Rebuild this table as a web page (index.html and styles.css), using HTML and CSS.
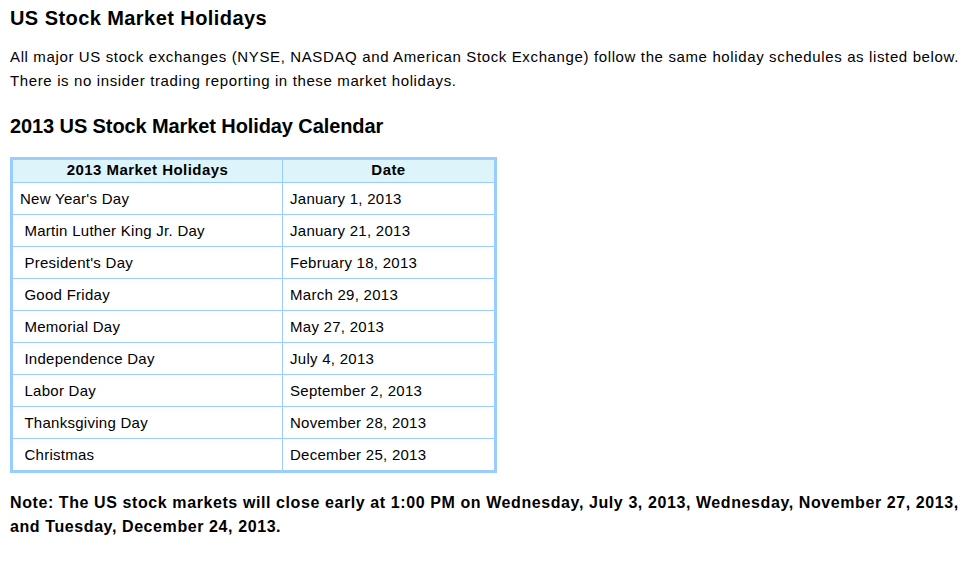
FILE: index.html
```html
<!DOCTYPE html>
<html>
<head>
<meta charset="utf-8">
<link rel="stylesheet" href="styles.css">
</head>
<body>
<div class="page">
  <h1 class="title">US Stock Market Holidays</h1>
  <p class="intro">All major US stock exchanges (NYSE, NASDAQ and American Stock Exchange) follow the same holiday schedules as listed below. There is no insider trading reporting in these market holidays.</p>
  <h2 class="subtitle">2013 US Stock Market Holiday Calendar</h2>
  <table class="holidays">
    <thead>
      <tr><th class="col-name">2013 Market Holidays</th><th class="col-date">Date</th></tr>
    </thead>
    <tbody>
      <tr><td>New Year's Day</td><td>January 1, 2013</td></tr>
      <tr><td>&nbsp;Martin Luther King Jr. Day</td><td>January 21, 2013</td></tr>
      <tr><td>&nbsp;President's Day</td><td>February 18, 2013</td></tr>
      <tr><td>&nbsp;Good Friday</td><td>March 29, 2013</td></tr>
      <tr><td>&nbsp;Memorial Day</td><td>May 27, 2013</td></tr>
      <tr><td>&nbsp;Independence Day</td><td>July 4, 2013</td></tr>
      <tr><td>&nbsp;Labor Day</td><td>September 2, 2013</td></tr>
      <tr><td>&nbsp;Thanksgiving Day</td><td>November 28, 2013</td></tr>
      <tr><td>&nbsp;Christmas</td><td>December 25, 2013</td></tr>
    </tbody>
  </table>
  <p class="note">Note: The US stock markets will close early at 1:00 PM on Wednesday, July 3, 2013, Wednesday, November 27, 2013, and Tuesday, December 24, 2013.</p>
</div>
</body>
</html>
```
FILE: styles.css
```css
html, body {
  margin: 0;
  padding: 0;
  background: #ffffff;
}
body {
  font-family: "Liberation Sans", Arial, sans-serif;
  color: #000000;
}
.page {
  padding: 6px 10px 0 10px;
  width: 957px;
}
.title {
  font-size: 20px;
  font-weight: bold;
  letter-spacing: 0.43px;
  margin: 0;
  line-height: 24px;
}
.intro {
  font-size: 15px;
  letter-spacing: 0.63px;
  line-height: 24px;
  margin: 15px 0 0 0;
}
.subtitle {
  font-size: 20px;
  font-weight: bold;
  letter-spacing: -0.1px;
  margin: 21px 0 0 0;
  line-height: 24px;
}
.holidays {
  border-collapse: collapse;
  border: 3px solid #99ccff;
  margin-top: 19px;
  width: 487px;
}
.holidays th {
  background: #ddf5fa;
  font-size: 15px;
  font-weight: bold;
  letter-spacing: 0.45px;
  height: 19px;
  line-height: 18px;
  padding: 0 0 3px 0;
  text-align: center;
  border: 1px solid #99ccff;
}
.holidays td {
  font-size: 15px;
  letter-spacing: 0.27px;
  height: 31px;
  padding: 0 7px;
  border: 1px solid #99ccff;
  text-align: left;
}
.holidays .col-name {
  width: 269px;
}
.note {
  font-size: 16px;
  font-weight: bold;
  letter-spacing: 0.59px;
  line-height: 24px;
  margin: 18px 0 0 0;
}
```
